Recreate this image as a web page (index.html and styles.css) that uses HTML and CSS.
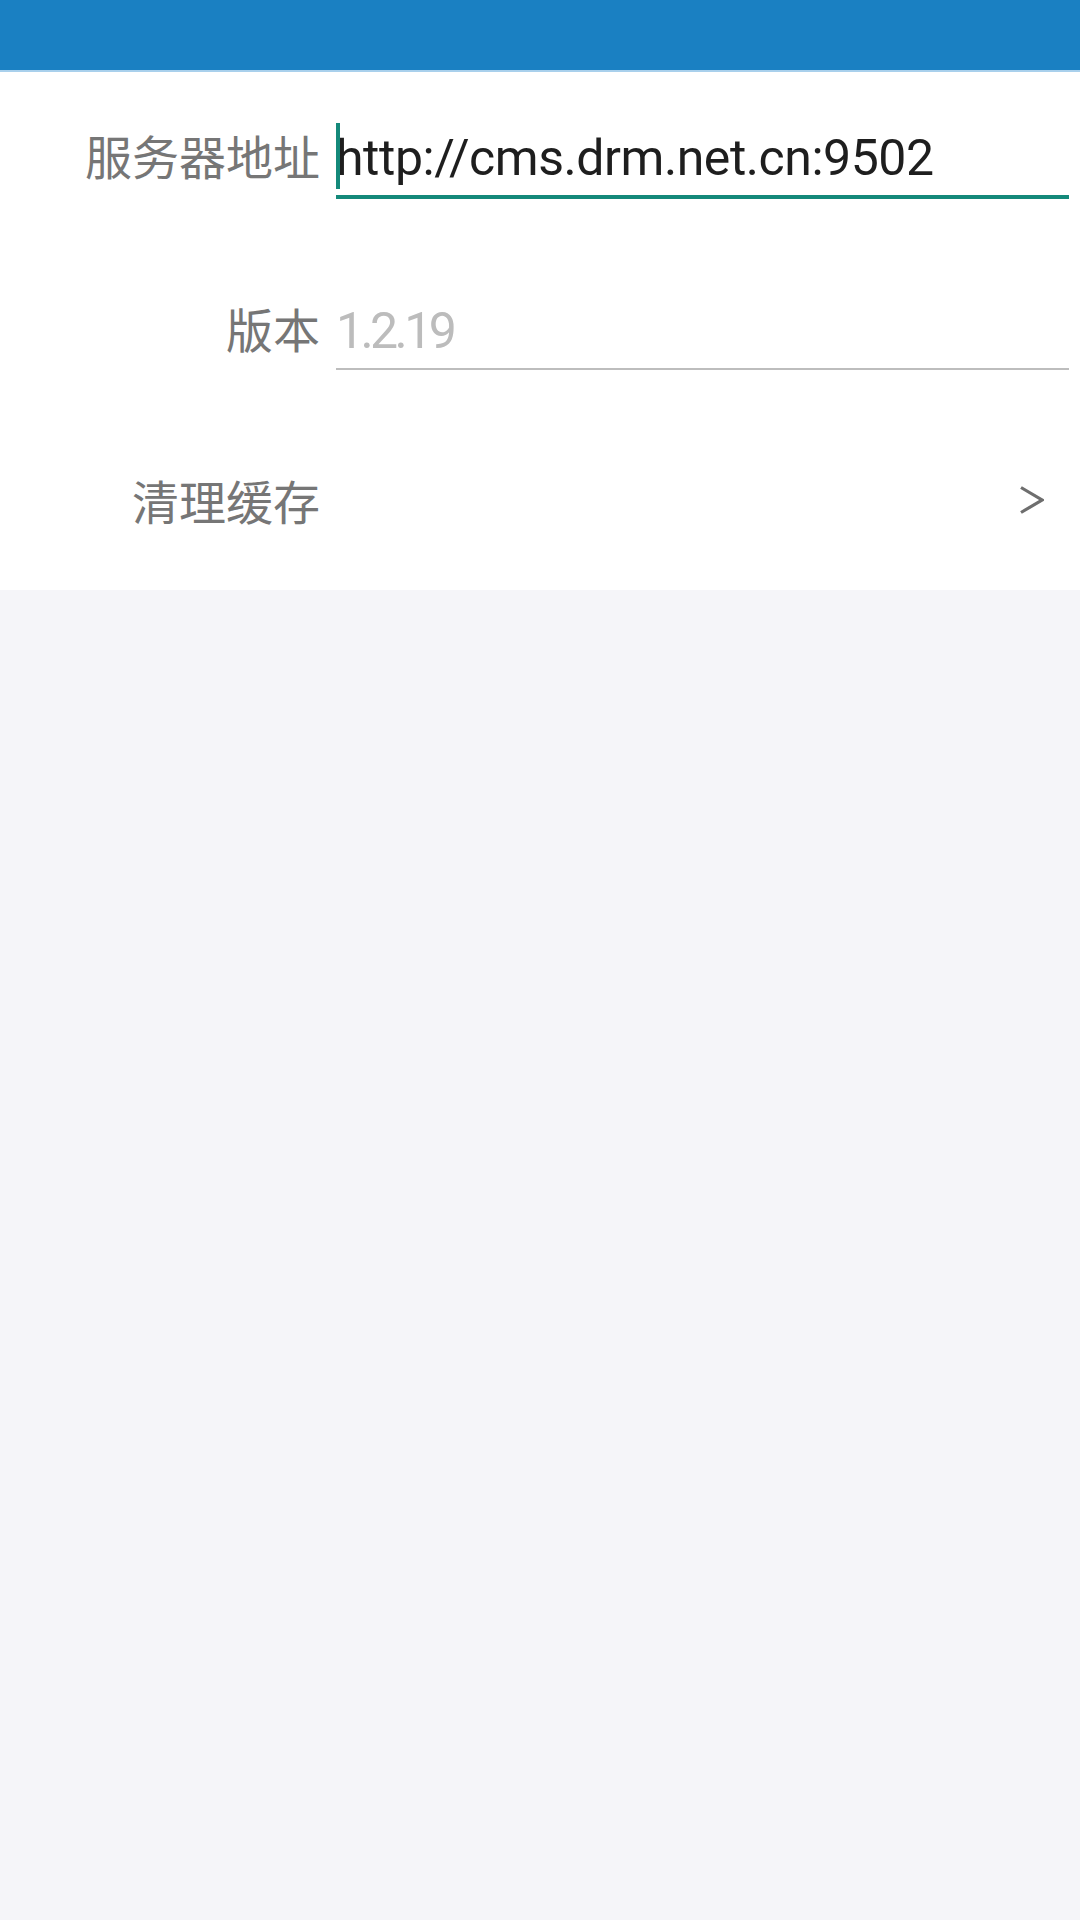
FILE: index.html
```html
<!DOCTYPE html>
<html lang="zh-CN">
<head>
<meta charset="utf-8">
<title>设置</title>
<link rel="stylesheet" href="styles.css">
</head>
<body>
<header class="appbar"></header>
<main class="panel">
  <div class="row row-server">
    <label class="label">服务器地址</label>
    <div class="field field-active">
      <span class="caret"></span>
      <span class="value">http://cms.drm.net.cn:9502</span>
    </div>
  </div>
  <div class="row row-version">
    <label class="label">版本</label>
    <div class="field field-disabled">
      <span class="value hint">1.2.19</span>
    </div>
  </div>
  <div class="row row-cache">
    <span class="label">清理缓存</span>
    <svg class="chevron" width="24" height="28" viewBox="0 0 24 28" aria-hidden="true">
      <polyline points="1,1.5 22,14 1,26.5" fill="none" stroke="#6e6e6e" stroke-width="3.2" stroke-linejoin="miter"/>
    </svg>
  </div>
</main>
</body>
</html>
```
FILE: styles.css
```css
html, body {
  margin: 0;
  padding: 0;
}
body {
  width: 1080px;
  min-height: 1920px;
  background: #f5f5f9;
  font-family: "Roboto", "Noto Sans CJK SC", sans-serif;
}
.appbar {
  height: 70px;
  background: #1a80c2;
  border-bottom: 2px solid #a9d0ec;
}
.panel {
  background: #ffffff;
  padding: 53px 11px 60px 0;
}
.row {
  display: flex;
  align-items: baseline;
  line-height: 60px;
}
.label {
  flex: 0 0 320px;
  text-align: right;
  font-family: "Noto Sans CJK SC", sans-serif;
  font-size: 47px;
  color: #767676;
  margin-right: 16px;
  line-height: 60px;
}
.field {
  flex: 1;
  position: relative;
  font-size: 50px;
  letter-spacing: -0.45px;
  line-height: 60px;
  padding-bottom: 7px;
}
.field-active {
  border-bottom: 4px solid #14897a;
  color: #1e1e1e;
}
.field-disabled {
  border-bottom: 2px solid #bdbdbd;
}
.hint {
  color: #bcbcbc;
  letter-spacing: -3.6px;
}
.caret {
  position: absolute;
  left: 0;
  top: -5px;
  width: 4px;
  height: 66px;
  background: #14897a;
}
.row-version {
  margin-top: 99px;
}
.row-cache {
  margin-top: 100px;
  align-items: center;
  padding-right: 25px;
}
.chevron {
  margin-left: auto;
  flex: 0 0 auto;
}
```
